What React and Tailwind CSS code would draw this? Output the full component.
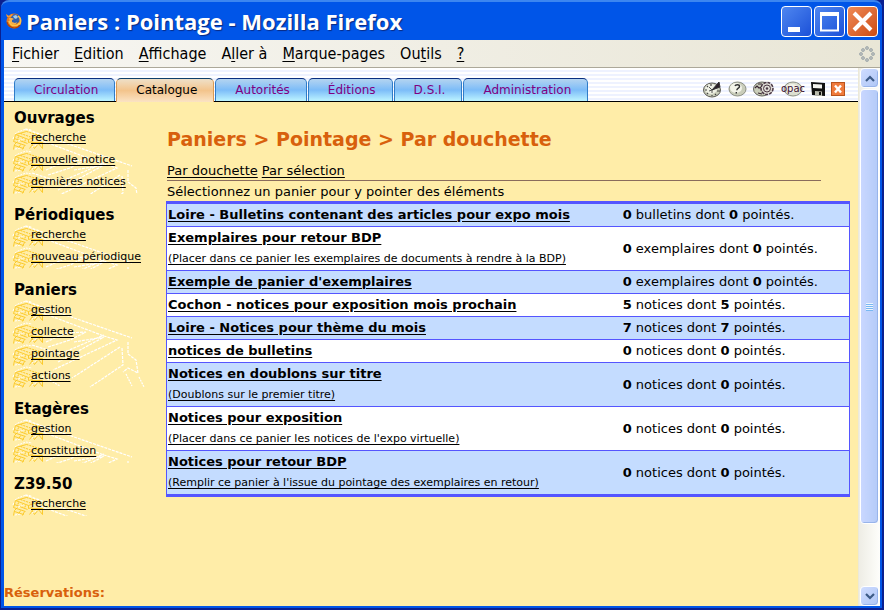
import React from "react";

const menuItems = [
  ["", "F", "ichier"],
  ["", "E", "dition"],
  ["", "A", "ffichage"],
  ["A", "l", "ler à"],
  ["", "M", "arque-pages"],
  ["Ou", "t", "ils"],
  ["", "?", ""],
];

const tabs = ["Circulation", "Catalogue", "Autorités", "Éditions", "D.S.I.", "Administration"];

const sections = [
  { title: "Ouvrages", links: ["recherche", "nouvelle notice", "dernières notices"] },
  { title: "Périodiques", links: ["recherche", "nouveau périodique"] },
  { title: "Paniers", links: ["gestion", "collecte", "pointage", "actions"] },
  { title: "Etagères", links: ["gestion", "constitution"] },
  { title: "Z39.50", links: ["recherche"] },
];

const baskets = [
  { name: "Loire - Bulletins contenant des articles pour expo mois", count: 0, kind: "bulletins", done: 0 },
  {
    name: "Exemplaires pour retour BDP",
    note: "(Placer dans ce panier les exemplaires de documents à rendre à la BDP)",
    count: 0,
    kind: "exemplaires",
    done: 0,
  },
  { name: "Exemple de panier d'exemplaires", count: 0, kind: "exemplaires", done: 0 },
  { name: "Cochon - notices pour exposition mois prochain", count: 5, kind: "notices", done: 5 },
  { name: "Loire - Notices pour thème du mois", count: 7, kind: "notices", done: 7 },
  { name: "notices de bulletins", count: 0, kind: "notices", done: 0 },
  { name: "Notices en doublons sur titre", note: "(Doublons sur le premier titre)", count: 0, kind: "notices", done: 0 },
  {
    name: "Notices pour exposition",
    note: "(Placer dans ce panier les notices de l'expo virtuelle)",
    count: 0,
    kind: "notices",
    done: 0,
  },
  {
    name: "Notices pour retour BDP",
    note: "(Remplir ce panier à l'issue du pointage des exemplaires en retour)",
    count: 0,
    kind: "notices",
    done: 0,
  },
];

function FirefoxIcon() {
  return (
    <svg width="16" height="16" viewBox="0 0 16 16" aria-hidden="true">
      <circle cx="8" cy="8" r="7.500" fill="#e8791c" />
      <path d="M0 1l3 2 3-2 1 3H1z" fill="#f39a35" />
      <path d="M5 4l3-3 4 1 2 3-1 4-3 2-4-1-2-3z" fill="#2f5fae" />
      <path d="M7 3l3-1 2 2-2 2-2-1z" fill="#9fcdf0" />
      <path d="M3 5l3 0 2 1-2 1 0 2 3 1 2-1-1 2-3 1-3-2z" fill="#f7b04a" />
      <path d="M12 3c3 2 3.500 6 1 9M3 8c.5 3 3 5 6 4.500 2 0 3.500-1 4.500-2.500" stroke="#fbc64b" strokeWidth="1.500" fill="none" />
      <path d="M1 9c.5 3.500 4 6 7.500 6 2 0 4-1 5.500-3" stroke="#a8400c" strokeWidth="1.200" fill="none" />
    </svg>
  );
}

function Throbber() {
  const dots = [
    [8, 2], [12, 4], [14, 8], [12, 12], [8, 14], [4, 12], [2, 8], [4, 4],
  ];
  return (
    <svg width="16" height="16" viewBox="0 0 16 16" aria-hidden="true">
      {dots.map(([x, y]) => (
        <circle key={`${x}-${y}`} cx={x} cy={y} r="1.500" fill="#b9bdbb" stroke="#9ba5a8" strokeWidth=".8" />
      ))}
    </svg>
  );
}

function Books() {
  return (
    <svg className="absolute top-0 left-0" width="34" height="22" viewBox="0 0 34 22" fill="none" aria-hidden="true">
      <g stroke="#fbc620" strokeWidth=".9">
        <path d="M3.500 6.500L14.500 3.500M3.500 6.500l13 5 11-4M3.500 6.500l-1 4 13 5" />
        <path d="M2.500 10.500l-1 3 12 4M16.500 11.500v3l4-1M27.500 7.500v3" />
        <path d="M5.500 13.500l-3 3-1 5M8.500 16.500l-2 4M12.500 17.500l-2 4M2.500 17.500l9 3" />
        <path d="M19.500 14.500h11v6M19.500 15.500l3 5 4-5 4 5M17.500 20.500l3-4" />
      </g>
      <g stroke="#fbc620" strokeWidth="1" strokeDasharray="2 1">
        <path d="M8.500 5.500l10 3.500M14.500 3.500l13 4M6.500 8.500l-1 3M10.500 10.500l-1 3M13.500 11.500l-1 3" />
      </g>
      <path d="M3 6l3-2 8-3 6 1M1 11l1-3M6 13l6-2M20 19l6-3M3 21l6-1" stroke="#fff" strokeDasharray="2 1" />
    </svg>
  );
}

function Sketch() {
  return (
    <svg className="absolute top-0 left-0" width="134" height="88" viewBox="0 0 134 88" fill="none" stroke="#fff" strokeWidth="1.200" aria-hidden="true">
      <path d="M13 1L120 38M28 12l64 24 13 4-64 30M36 47l22-7 16-8-20 1-20 9M20 45l28 9 44-19" strokeDasharray="3 1" />
      <path d="M62 42l30-5-46 25M108 47L60 78M110 48l1 17-33 22M116 42v12l8 6 2 13-10-5-5 4" strokeDasharray="3 1" />
      <path d="M127 77l5 10M30 76l18 10M36 72l20 8M114 74l6 12" strokeDasharray="2 1" />
    </svg>
  );
}

function ToolIcons() {
  return (
    <div className="flex h-4 items-center gap-1.5">
      <a href="#clock" title="Historique" className="block">
        <svg width="19" height="18" viewBox="0 0 19 18" fill="none">
          <ellipse cx="9" cy="10" rx="8.500" ry="7" fill="#c9cdba" stroke="#5c5c56" />
          <ellipse cx="8" cy="9" rx="6" ry="5" fill="#eef0e4" />
          <path d="M9 10l7-8 1 5z" stroke="#333" strokeWidth="1" fill="#2b2028" />
          <path d="M9 10L6 7M9 10l-3 1M9 10v3" stroke="#555" />
          <path d="M2 10h2M8 4v2M4 14l1-1M14 11h3M9 15v1M13 15l-1-1M4 6l1 1" stroke="#444" strokeWidth="1.200" />
        </svg>
      </a>
      <a href="#aide" title="Aide" className="block">
        <svg width="19" height="16" viewBox="0 0 19 16" fill="none">
          <ellipse cx="9.500" cy="8" rx="8.500" ry="7" fill="#c9cdba" stroke="#8d9084" />
          <ellipse cx="8" cy="7" rx="6" ry="5" fill="#f3f4e9" />
          <path d="M7 5c.5-1.500 4.500-1.800 4.500.4C11.500 7.200 9 7 8.800 9.200M8.300 11v1.500" stroke="#333" strokeWidth="1.400" />
        </svg>
      </a>
      <a href="#parametres" title="Paramètres" className="block">
        <svg width="22" height="16" viewBox="0 0 22 16" fill="none">
          <ellipse cx="9" cy="8" rx="8.500" ry="7" fill="#c9cdba" stroke="#66665f" />
          <path d="M2 7l2-2 2 2 3-1M5 3l4 0M5 12l4 1" stroke="#3a2734" strokeWidth="1.200" />
          <circle cx="14" cy="7.500" r="6" fill="#dedbd5" stroke="#4a3744" strokeWidth="1.500" strokeDasharray="3 1" />
          <circle cx="14" cy="7.500" r="3.500" stroke="#4a3744" />
          <circle cx="14" cy="7.500" r="1.200" fill="#4a3744" />
        </svg>
      </a>
      <a href="#opac" title="opac" className="relative flex h-4 w-6 items-center justify-center text-[10px] leading-4 text-[#3c1030]">
        <svg className="absolute top-0 left-0.5" width="20" height="16" viewBox="0 0 20 16" fill="none" aria-hidden="true">
          <ellipse cx="10" cy="8" rx="9" ry="7" fill="#dcdfd0" stroke="#8d9084" />
          <ellipse cx="9" cy="7" rx="6" ry="4" fill="#f3f4e9" />
        </svg>
        <span className="relative">opac</span>
      </a>
      <a href="#sauvegarder" title="Sauvegarder" className="block">
        <svg width="14" height="16" viewBox="0 0 14 16">
          <path d="M0 1l14 1v13l-13-1z" fill="#111" />
          <path d="M2 3l9 .5v4L2 7z" fill="#f4f4ef" />
          <path d="M4 10l7 .5V15l-7-.5z" fill="#b9bbae" />
          <path d="M8 11h2v3H8z" fill="#111" />
        </svg>
      </a>
      <a href="#quitter" title="Quitter" className="block">
        <svg width="14" height="14" viewBox="0 0 14 14">
          <rect x=".5" y=".5" width="13" height="13" fill="#ef7a3c" stroke="#b9531c" />
          <path d="M4 3.500l6 7M10 3.500l-6 7" stroke="#fff" strokeWidth="2.400" />
        </svg>
      </a>
    </div>
  );
}

function Arrow({ down }) {
  return (
    <svg width="10" height="7" viewBox="0 0 10 7" fill="none" stroke="#3c5a86" strokeWidth="2.200" aria-hidden="true">
      {down ? <path d="M1 1l4 4 4-4" /> : <path d="M1 6l4-4 4 4" />}
    </svg>
  );
}

const scrollButton =
  "flex h-5 shrink-0 items-center justify-center rounded-sm border border-white bg-linear-to-br from-[#cfdcff] to-[#aec6f6] shadow-[inset_-1px_-1px_0_#98b4ea]";

function Scrollbar() {
  return (
    <div className="flex w-[22px] shrink-0 flex-col border-l border-[#ece9d8] bg-linear-to-r from-[#eeede5] to-[#fefefb] pr-px pl-px">
      <button type="button" aria-label="Défiler vers le haut" className={scrollButton}>
        <Arrow />
      </button>
      <div className="mt-px flex flex-[7] items-center justify-center rounded-sm border border-white bg-linear-to-r from-[#c9d7ff] to-[#b4cbf8] shadow-[inset_-1px_-1px_0_#98b4ea]">
        <span className="h-2 w-[7px] bg-[repeating-linear-gradient(to_bottom,#eef4fe_0_1px,#79b8f2_1px_2px)]" />
      </div>
      <div className="flex-1" />
      <button type="button" aria-label="Défiler vers le bas" className={scrollButton}>
        <Arrow down />
      </button>
    </div>
  );
}

const titleButton =
  "flex h-[31px] w-[31px] items-center justify-center rounded-[4px] border border-white";

function TitleBar() {
  return (
    <header className="flex h-10 shrink-0 items-center justify-between rounded-t-lg border-t-2 border-[#3c86f0] bg-[#0055e8] pr-1 pb-px pl-[5px]">
      <div className="flex items-center gap-1">
        <FirefoxIcon />
        <h1 className="font-['Open_Sans',sans-serif] text-[22px] leading-8 font-bold text-white [text-shadow:1px_1px_1px_#0a2a80]">
          Paniers : Pointage - Mozilla Firefox
        </h1>
      </div>
      <div className="flex gap-0.5 pt-0.5">
        <button type="button" aria-label="Réduire" className={`${titleButton} bg-linear-to-br from-[#4f86f0] to-[#1c50d8]`}>
          <svg width="25" height="25" viewBox="0 0 25 25"><path d="M4 18h12v5H4z" fill="#fff" /></svg>
        </button>
        <button type="button" aria-label="Agrandir" className={`${titleButton} bg-linear-to-br from-[#4f86f0] to-[#1c50d8]`}>
          <svg width="25" height="25" viewBox="0 0 25 25" fill="none">
            <path d="M4 5.500h17V21.500H4z" stroke="#fff" strokeWidth="2" />
            <path d="M3 3h19v4H3z" fill="#fff" />
          </svg>
        </button>
        <button type="button" aria-label="Fermer" className={`${titleButton} bg-linear-to-br from-[#ef8a55] to-[#cc4a0c]`}>
          <svg width="25" height="25" viewBox="0 0 25 25"><path d="M4 4l17 17M21 4L4 21" stroke="#fff" strokeWidth="4" /></svg>
        </button>
      </div>
    </header>
  );
}

function MenuBar() {
  return (
    <nav className="flex h-7 shrink-0 items-center justify-between border-b border-[#aca899] bg-linear-to-r from-[#f7f6f2] to-[#e9e6d6] pr-[5px] pl-2">
      <div className="flex gap-[15px] font-['DejaVu_Sans_Condensed','DejaVu_Sans',sans-serif] text-[16px] leading-6 text-black">
        {menuItems.map(([before, key, after]) => (
          <button type="button" key={key}>
            {before}
            <span className="underline underline-offset-2">{key}</span>
            {after}
          </button>
        ))}
      </div>
      <Throbber />
    </nav>
  );
}

function TabBar() {
  return (
    <div className="flex h-[34px] shrink-0 items-end justify-between border-b border-black bg-[repeating-linear-gradient(to_bottom,#ffffff_0_2px,#eef2ff_2px_4px)] pr-[13px] pl-2.5">
      <nav className="flex h-[23px] gap-px">
        {tabs.map((tab) => (
          <a
            key={tab}
            href={`#${tab}`}
            className={
              tab === "Catalogue"
                ? "-mb-px rounded-t-[5px] border-x border-t border-[#d99a52] border-t-[#10406c] bg-linear-to-b from-[#eee0c8] via-[#f3c48c] to-[#fbe3c4] pr-4 pl-[19px] text-[12px] leading-[23px] text-black"
                : "rounded-t-[5px] border-x border-t border-[#2f7cc8] border-t-[#0a2f80] bg-linear-to-b from-[#b4d4f0] via-[#7cbcf8] to-[#bdf4ff] pr-4 pl-[19px] text-[12px] leading-[23px] text-[#800080]"
            }
          >
            {tab}
          </a>
        ))}
      </nav>
      <div className="pb-1">
        <ToolIcons />
      </div>
    </div>
  );
}

function Sidebar() {
  return (
    <aside className="w-[162px] shrink-0 pt-1.5">
      {sections.map((section) => (
        <section key={section.title} className="mb-[11px]">
          <h2 className="pl-2.5 text-[15px] leading-5 font-bold">{section.title}</h2>
          <div className="relative ml-2 w-[134px] overflow-hidden">
            <Sketch />
            <ul>
              {section.links.map((link) => (
                <li key={link} className="relative pb-0.5 pl-[19px] text-[11px] leading-5 whitespace-nowrap">
                  <Books />
                  <a href={`#${link}`} className="relative underline underline-offset-2">
                    {link}
                  </a>
                </li>
              ))}
            </ul>
          </div>
        </section>
      ))}
    </aside>
  );
}

function BasketTable() {
  return (
    <table className="w-full border-separate border-spacing-0 border-x border-y-3 border-[#5555ff]">
      <tbody>
        {baskets.map((b) => (
          <tr key={b.name} className="group odd:bg-[#c4dcff] even:bg-white">
            <td className="w-2/3 border-b border-[#5555ff] p-px group-last:border-b-0">
              <a href="#panier" className="block leading-5">
                <b className="underline underline-offset-2">{b.name}</b>
                {b.note && (
                  <span className="block text-[11px] leading-[21px] underline underline-offset-2">{b.note}</span>
                )}
              </a>
            </td>
            <td className="border-b border-[#5555ff] p-px leading-5 group-last:border-b-0">
              <b>{b.count}</b> {b.kind} dont <b>{b.done}</b> pointés.
            </td>
          </tr>
        ))}
      </tbody>
    </table>
  );
}

export default function App() {
  return (
    <div className="flex min-h-screen flex-col border-r-2 border-b-2 border-l border-[#0a1f90] bg-[#0a1f90] font-['DejaVu_Sans',sans-serif] text-[13px] text-black">
      <TitleBar />
      <div className="flex flex-1 flex-col border-r-2 border-b-2 border-l-3 border-[#0055e8]">
        <MenuBar />
        <div className="flex flex-1">
          <div className="flex min-w-0 flex-1 flex-col bg-[#ffeda8]">
            <TabBar />
            <div className="flex">
              <Sidebar />
              <main className="min-w-0 flex-1 pt-[21px] pr-2">
                <div className="pl-px">
                  <h1 className="text-[19px] leading-8 font-bold text-[#d8600c]">Paniers &gt; Pointage &gt; Par douchette</h1>
                  <nav className="mt-[7px] flex gap-1 leading-[18px]">
                    <a href="#douchette" className="underline underline-offset-2">Par douchette</a>
                    <a href="#selection" className="underline underline-offset-2">Par sélection</a>
                  </nav>
                  <hr className="mr-[29px] border-[#8a6c5c]" />
                  <p className="pt-0.5 leading-[18px]">Sélectionnez un panier pour y pointer des éléments</p>
                </div>
                <BasketTable />
              </main>
            </div>
            <h2 className="mt-auto pb-[3px] text-[13px] leading-5 font-bold text-[#d8600c]">Réservations:</h2>
          </div>
          <Scrollbar />
        </div>
      </div>
    </div>
  );
}
